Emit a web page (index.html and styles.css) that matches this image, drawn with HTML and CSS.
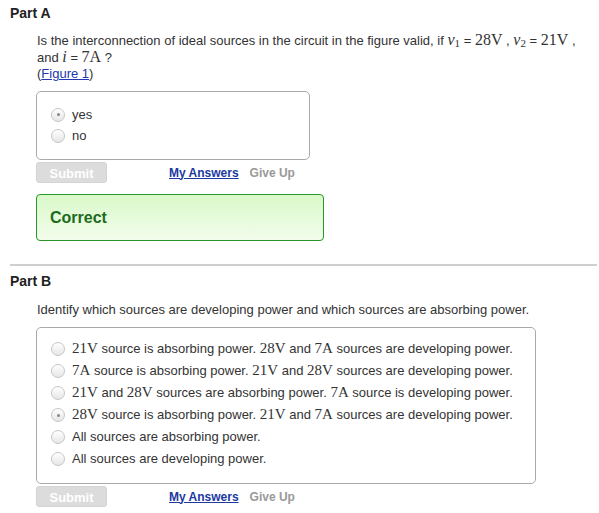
FILE: index.html
```html
<!DOCTYPE html>
<html>
<head>
<meta charset="utf-8">
<link rel="stylesheet" href="styles.css">
</head>
<body>
<div class="page">
  <section class="part">
    <h2 class="part-title">Part A</h2>
    <div class="content">
      <p class="question qa">Is the interconnection of ideal sources in the circuit in the figure valid, if <span class="m"><i>v</i><sub>1</sub></span> = <span class="m">28V</span> , <span class="m"><i>v</i><sub>2</sub></span> = <span class="m">21V</span> ,<br>and <span class="m"><i>i</i></span> = <span class="m">7A</span> ?<br>(<a class="fig" href="#">Figure 1</a>)</p>
      <div class="choices choices-a">
        <label class="opt"><span class="radio checked"></span><span class="txt">yes</span></label>
        <label class="opt"><span class="radio"></span><span class="txt">no</span></label>
      </div>
      <div class="actions">
        <span class="submit">Submit</span>
        <a class="my" href="#">My Answers</a>
        <span class="give">Give Up</span>
      </div>
      <div class="correct">Correct</div>
    </div>
  </section>
  <hr class="sep">
  <section class="part">
    <h2 class="part-title">Part B</h2>
    <div class="content">
      <p class="question q2">Identify which sources are developing power and which sources are absorbing power.</p>
      <div class="choices choices-b">
        <label class="opt"><span class="radio"></span><span class="txt"><span class="m">21V</span> source is absorbing power. <span class="m">28V</span> and <span class="m">7A</span> sources are developing power.</span></label>
        <label class="opt"><span class="radio"></span><span class="txt"><span class="m">7A</span> source is absorbing power. <span class="m">21V</span> and <span class="m">28V</span> sources are developing power.</span></label>
        <label class="opt"><span class="radio"></span><span class="txt"><span class="m">21V</span> and <span class="m">28V</span> sources are absorbing power. <span class="m">7A</span> source is developing power.</span></label>
        <label class="opt"><span class="radio checked"></span><span class="txt"><span class="m">28V</span> source is absorbing power. <span class="m">21V</span> and <span class="m">7A</span> sources are developing power.</span></label>
        <label class="opt"><span class="radio"></span><span class="txt">All sources are absorbing power.</span></label>
        <label class="opt"><span class="radio"></span><span class="txt">All sources are developing power.</span></label>
      </div>
      <div class="actions">
        <span class="submit">Submit</span>
        <a class="my" href="#">My Answers</a>
        <span class="give">Give Up</span>
      </div>
    </div>
  </section>
</div>
</body>
</html>
```
FILE: styles.css
```css
html, body {
  margin: 0;
  padding: 0;
  background: #fff;
}
body {
  font-family: "Liberation Sans", Arial, sans-serif;
  font-size: 13px;
  color: #333;
}
.page {
  padding: 6px 2px 0 10px;
}
.part-title {
  margin: 0;
  font-size: 14px;
  font-weight: bold;
  line-height: 14px;
  color: #222;
}
.content {
  padding-left: 26px;
}
.question {
  margin: 12px 0 0 1px;
  line-height: 16px;
  color: #333;
}
.q2 {
  margin-top: 14px;
}
.m {
  font-family: "Liberation Serif", "Times New Roman", serif;
  font-size: 15px;
  line-height: 1;
  color: #333;
}
.qa .m {
  font-size: 16px;
}
.m i {
  font-style: italic;
}
.m sub {
  font-family: "Liberation Serif", serif;
  font-size: 11px;
  line-height: 0;
  vertical-align: -2px;
}
.fig {
  color: #2039b0;
  text-decoration: underline;
}
.choices {
  border: 1px solid #aaa;
  border-radius: 5px;
  display: flex;
  flex-direction: column;
}
.choices-a {
  margin-top: 9px;
  width: 258px;
  padding: 12px 0 13px 14px;
}
.choices-b {
  margin-top: 9px;
  width: 484px;
  padding: 10px 0 13px 14px;
}
.opt {
  display: flex;
  align-items: center;
  height: 22px;
  white-space: nowrap;
  color: #333;
}
.choices-a .opt {
  height: 21px;
}
.txt {
  line-height: 22px;
}
.radio {
  flex: none;
  width: 12px;
  height: 12px;
  border: 1px solid #c6c6c6;
  border-radius: 50%;
  background: linear-gradient(#ffffff, #e6e6e6);
  margin-right: 7px;
  position: relative;
  box-sizing: content-box;
}
.radio.checked::after {
  content: "";
  position: absolute;
  left: 4.5px;
  top: 4.5px;
  width: 3px;
  height: 3px;
  border-radius: 50%;
  background: #888;
}
.actions {
  display: flex;
  align-items: center;
  margin-top: 2px;
  height: 21px;
  font-weight: bold;
  font-size: 12px;
}
.submit {
  width: 71px;
  height: 21px;
  line-height: 21px;
  text-align: center;
  background: #dcdcdc;
  border: 1px solid #d4d4d4;
  border-radius: 3px;
  color: #fff;
  box-sizing: border-box;
  font-size: 13px;
}
.my {
  margin-left: 62px;
  color: #2039a0;
  text-decoration: underline;
}
.give {
  margin-left: 11px;
  color: #999;
}
.correct {
  margin-top: 11px;
  width: 288px;
  height: 47px;
  box-sizing: border-box;
  border: 1px solid #2a962a;
  border-radius: 4px;
  background: linear-gradient(#d9f9c9, #f2fdec);
  color: #1d6b1d;
  font-weight: bold;
  font-size: 16px;
  line-height: 45px;
  padding-left: 13px;
}
.sep {
  margin: 23px 0 0 0;
  border: 0;
  height: 2px;
  background: #cfcfcf;
}
.sep + .part .part-title {
  margin-top: 8px;
}
```
